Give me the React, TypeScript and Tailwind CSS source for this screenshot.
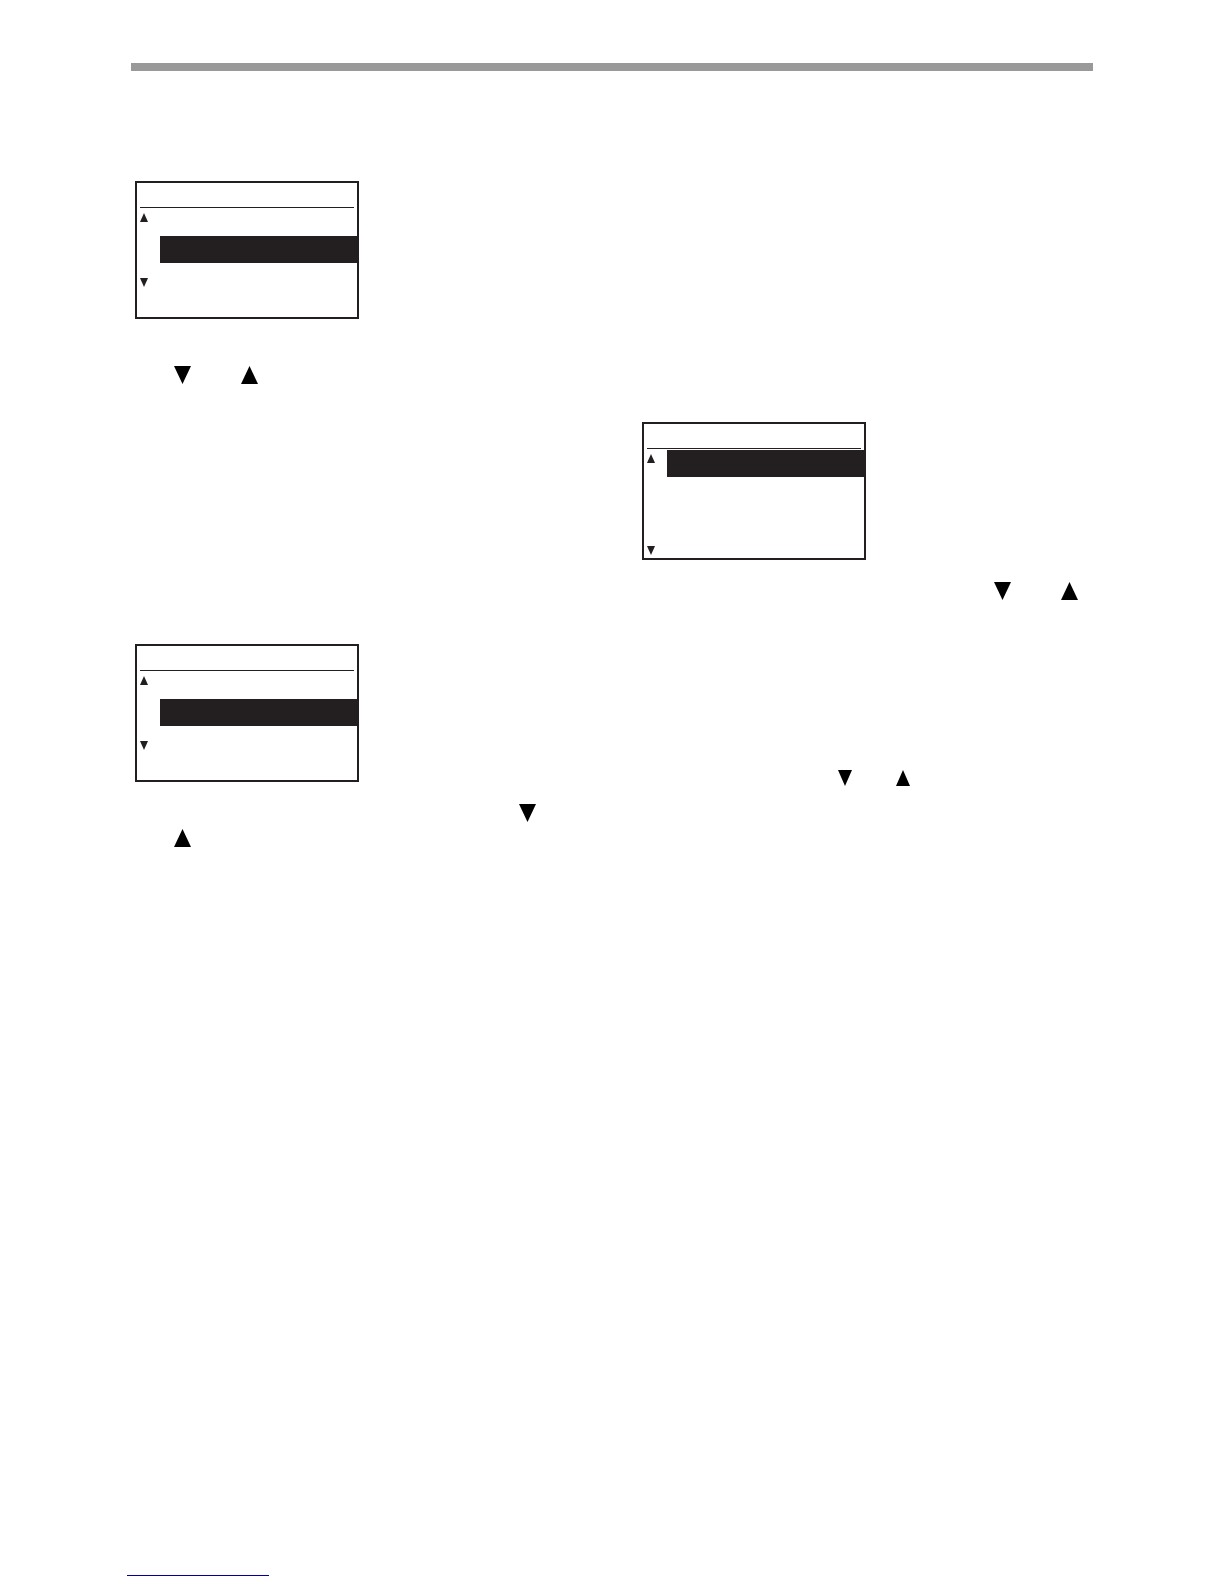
import React from 'react';

type Direction = 'up' | 'down';

interface ArrowProps {
  direction: Direction;
  className: string;
}

const Arrow: React.FC<ArrowProps> = ({ direction, className }) => (
  <svg viewBox="0 0 16 18" preserveAspectRatio="none" fill="currentColor" aria-hidden="true" className={`block shrink-0 ${className}`}>
    <path d={direction === 'up' ? 'M8 0L16 18H0Z' : 'M0 0H16L8 18Z'} />
  </svg>
);

interface ScreenProps {
  selectedRow: number;
  lastRow: number;
}

const rows = [0, 1, 2, 3];

// Small LCD menu: title line, four rows, scroll arrows on the left
const Screen: React.FC<ScreenProps> = ({ selectedRow, lastRow }) => (
  <div className="w-56 border-2 border-[#231f20] bg-white text-[#231f20]">
    <div className="mx-[3px] mb-px h-[25px] border-b border-[#231f20]" />
    <ul>
      {rows.map(row => (
        <li key={row} className="flex h-[27px]">
          <div className={`flex w-[23px] pt-1 pb-[3px] pl-[3px] ${row === lastRow ? 'items-end' : 'items-start'}`}>
            {row === 0 && <Arrow direction="up" className="h-[9px] w-2" />}
            {row === lastRow && <Arrow direction="down" className="h-[9px] w-2" />}
          </div>
          <div className={`flex-1 ${row === selectedRow ? 'bg-[#231f20]' : ''}`} />
        </li>
      ))}
    </ul>
  </div>
);

const App: React.FC = () => {
  return (
    <div className="flex min-h-screen flex-col bg-white px-[131px] pt-[63px] pb-2 font-['Liberation_Sans',sans-serif] text-black">
      <header className="h-2 bg-[#999999]" />

      <main className="grid grid-cols-2 gap-[52px]">
        <section className="px-1 pt-[110px]">
          <Screen selectedRow={1} lastRow={2} />
          <div className="mt-[47px] ml-[39px] flex gap-[50px]">
            <Arrow direction="down" className="h-[18px] w-[17px]" />
            <Arrow direction="up" className="h-[18px] w-[17px]" />
          </div>

          <div className="mt-[260px]">
            <Screen selectedRow={1} lastRow={2} />
          </div>
          <div className="mt-[22px] ml-[384px]">
            <Arrow direction="down" className="h-[18px] w-[17px]" />
          </div>
          <div className="mt-[7px] ml-[39px]">
            <Arrow direction="up" className="h-[18px] w-[17px]" />
          </div>
        </section>

        <section className="px-1 pt-[351px]">
          <Screen selectedRow={0} lastRow={3} />
          <div className="mt-[22px] mr-[11px] flex justify-end gap-[50px]">
            <Arrow direction="down" className="h-[18px] w-[17px]" />
            <Arrow direction="up" className="h-[18px] w-[17px]" />
          </div>
          <div className="mt-[170px] ml-[196px] flex gap-11">
            <Arrow direction="down" className="h-4 w-[14px]" />
            <Arrow direction="up" className="h-4 w-[14px]" />
          </div>
        </section>
      </main>

      <footer className="-ml-1 mt-auto">
        <a href="#top" className="block h-4 w-[142px] border-b border-[#0000a0]" />
      </footer>
    </div>
  );
};

export default App;
